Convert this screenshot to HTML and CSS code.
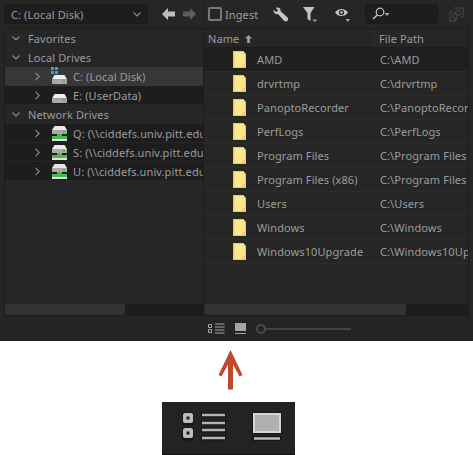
FILE: index.html
```html
<!DOCTYPE html>
<html lang="en">
<head>
    <meta charset="UTF-8">
    <title>Media Browser</title>
    <link rel="stylesheet" href="styles.css">
</head>
<body>
    <svg class="defs">
        <symbol id="chev-down" viewBox="0 0 8 5"><path d="M.5.5L4 4 7.500.5" fill="none" stroke="#8d8d8d" stroke-width="1.1"/></symbol>
        <symbol id="chev-right" viewBox="0 0 5 9"><path d="M.5.8L4.200 4.500.5 8.200" fill="none" stroke="#8d8d8d" stroke-width="1.1"/></symbol>
        <symbol id="folder" viewBox="0 0 13 17">
            <path d="M0 0h10.500L13 3v14H0z" fill="#f4c94f"/>
            <path d="M1.500 1h8.500l2 2.500v9H9.500V16h-8z" fill="#fde88f"/>
            <path d="M9.500 12.500H12V16H9.500z" fill="#f8d766"/>
        </symbol>
        <symbol id="drive" viewBox="0 0 15 9">
            <path d="M2.500 0h10L15 4.500H0z" fill="#f0f0f0"/>
            <path d="M0 4.500h15V8a1 1 0 0 1-1 1H1a1 1 0 0 1-1-1z" fill="#a9a9a9"/>
            <rect x="11" y="5.500" width="2" height="2" fill="#35c23d"/>
        </symbol>
        <symbol id="netdrive" viewBox="0 0 15 15">
            <path d="M2.500 0h10L15 4H0z" fill="#e8e8e8"/>
            <rect y="4" width="15" height="4" fill="#a9a9a9"/>
            <rect x="11" y="5" width="2" height="2" fill="#35c23d"/>
            <path d="M5 8h5v2h5v3H0v-3h5z" fill="#47b94d"/>
            <rect y="13" width="15" height="2" fill="#e0e0e0"/>
        </symbol>
    </svg>

    <div class="panel">
        <div class="toolbar">
            <div class="select">
                <span>C: (Local Disk)</span>
                <svg class="sel-chev"><use href="#chev-down"/></svg>
            </div>
            <div class="nav">
                <svg width="14" height="12" viewBox="0 0 14 12"><path d="M0 6l6-6v3.500h7v5H6V12z" fill="#bdbdbd"/></svg>
                <svg width="14" height="12" viewBox="0 0 14 12"><path d="M14 6L8 0v3.500H1v5h7V12z" fill="#5d5d5d"/></svg>
            </div>
            <div class="sep"></div>
            <div class="ingest">
                <span class="check"></span>
                <span>Ingest</span>
            </div>
            <svg class="tool wrench" width="15" height="15" viewBox="0 0 15 15"><path d="M.5 2.500L3 5l2-1.500L3 1C5-.2 8 1 7.500 4l7 6.500c1 1 .7 2.300 0 3.200s-2.500 1-3.500 0L5 7C2.500 8 0 5.500.5 2.500z" fill="#c4c4c4"/></svg>
            <svg class="tool filter" width="15" height="17" viewBox="0 0 15 17"><path d="M0 1h11.500L7.500 7v8l-3-2V7z" fill="#c4c4c4"/><path d="M9.500 13.500h4.500L11.800 16z" fill="#a8a8a8"/></svg>
            <svg class="tool eye" width="15" height="15" viewBox="0 0 15 15"><path d="M0 5.500C3 .8 10 .8 13 5.500 10 10.200 3 10.200 0 5.500z" fill="#c4c4c4"/><circle cx="6.500" cy="5.500" r="2.600" fill="#262626"/><circle cx="6.500" cy="5.500" r="1.300" fill="#c4c4c4"/><path d="M10.500 12h4.500L12.800 15z" fill="#a8a8a8"/></svg>
            <div class="search">
                <svg width="18" height="13" viewBox="0 0 18 13"><circle cx="8" cy="5" r="3.800" fill="none" stroke="#c4c4c4" stroke-width="1.200"/><path d="M5.200 8L1 12" stroke="#c4c4c4" stroke-width="1.500"/><path d="M12.500 6h5L15 9z" fill="#a8a8a8"/></svg>
            </div>
            <svg class="link" width="15" height="15" viewBox="0 0 15 15"><path d="M5 1h9v9h-2M1 8V5h3M1 8v6h6v-3" fill="none" stroke="#4a4a4a"/><circle cx="6" cy="9" r="2.500" fill="none" stroke="#4a4a4a"/><circle cx="9" cy="6" r="2.500" fill="none" stroke="#4a4a4a"/></svg>
        </div>

        <div class="browser">
            <div class="tree">
                <div class="tree-body">
                    <div class="tree-row"><svg class="chev-d"><use href="#chev-down"/></svg><span>Favorites</span></div>
                    <div class="tree-row"><svg class="chev-d"><use href="#chev-down"/></svg><span>Local Drives</span></div>
                    <div class="tree-row sub active">
                        <svg class="chev-r"><use href="#chev-right"/></svg>
                        <span class="drive-wrap">
                            <svg class="win" viewBox="0 0 7 7"><path d="M0 0h3v3H0zM4 0h3v3H4zM0 4h3v3H0zM4 4h3v3H4z" fill="#21a9e8"/></svg>
                            <svg class="drive"><use href="#drive"/></svg>
                        </span>
                        <span>C: (Local Disk)</span>
                    </div>
                    <div class="tree-row sub dark">
                        <svg class="chev-r"><use href="#chev-right"/></svg>
                        <span class="drive-wrap"><svg class="drive"><use href="#drive"/></svg></span>
                        <span>E: (UserData)</span>
                    </div>
                    <div class="tree-row"><svg class="chev-d"><use href="#chev-down"/></svg><span>Network Drives</span></div>
                    <div class="tree-row sub dark">
                        <svg class="chev-r"><use href="#chev-right"/></svg>
                        <span class="drive-wrap"><svg class="netdrive"><use href="#netdrive"/></svg></span>
                        <span>Q: (\\ciddefs.univ.pitt.edu</span>
                    </div>
                    <div class="tree-row sub dark">
                        <svg class="chev-r"><use href="#chev-right"/></svg>
                        <span class="drive-wrap"><svg class="netdrive"><use href="#netdrive"/></svg></span>
                        <span>S: (\\ciddefs.univ.pitt.edu</span>
                    </div>
                    <div class="tree-row sub dark">
                        <svg class="chev-r"><use href="#chev-right"/></svg>
                        <span class="drive-wrap"><svg class="netdrive"><use href="#netdrive"/></svg></span>
                        <span>U: (\\ciddefs.univ.pitt.edu</span>
                    </div>
                </div>
                <div class="scroll"><div class="thumb left-thumb"></div></div>
            </div>

            <div class="files">
                <div class="files-body">
                    <div class="file-head">
                        <div class="col-name">Name <svg width="7" height="8" viewBox="0 0 7 8"><path d="M3.500 0L7 3.500H4.800V8H2.200V3.500H0z" fill="#a0a0a0"/></svg></div>
                        <div class="col-path">File Path</div>
                    </div>
                    <div class="file-row first"><svg class="folder"><use href="#folder"/></svg><span class="fname">AMD</span><span class="fpath">C:\AMD</span></div>
                    <div class="file-row"><svg class="folder"><use href="#folder"/></svg><span class="fname">drvrtmp</span><span class="fpath">C:\drvrtmp</span></div>
                    <div class="file-row"><svg class="folder"><use href="#folder"/></svg><span class="fname">PanoptoRecorder</span><span class="fpath">C:\PanoptoRecorder</span></div>
                    <div class="file-row"><svg class="folder"><use href="#folder"/></svg><span class="fname">PerfLogs</span><span class="fpath">C:\PerfLogs</span></div>
                    <div class="file-row"><svg class="folder"><use href="#folder"/></svg><span class="fname">Program Files</span><span class="fpath">C:\Program Files</span></div>
                    <div class="file-row"><svg class="folder"><use href="#folder"/></svg><span class="fname">Program Files (x86)</span><span class="fpath">C:\Program Files (x86)</span></div>
                    <div class="file-row"><svg class="folder"><use href="#folder"/></svg><span class="fname">Users</span><span class="fpath">C:\Users</span></div>
                    <div class="file-row"><svg class="folder"><use href="#folder"/></svg><span class="fname">Windows</span><span class="fpath">C:\Windows</span></div>
                    <div class="file-row"><svg class="folder"><use href="#folder"/></svg><span class="fname">Windows10Upgrade</span><span class="fpath">C:\Windows10Upgrade</span></div>
                </div>
                <div class="scroll"><div class="thumb right-thumb"></div></div>
            </div>
        </div>

        <div class="statusbar">
            <svg width="17" height="11" viewBox="0 0 17 11"><path d="M.5 1.500h3v3h-3zM.5 6.500h3v3h-3z" fill="none" stroke="#a5a5a5"/><path d="M7 1h9.500M7 4h9.500M7 7h9.500M7 10h9.500" stroke="#a5a5a5"/></svg>
            <svg class="thumb-view" width="11" height="11" viewBox="0 0 11 11"><rect width="11" height="8" fill="#a5a5a5"/><path d="M0 10.500h11" stroke="#a5a5a5"/></svg>
            <span class="slider-knob"></span>
            <span class="slider-track"></span>
        </div>
    </div>

    <div class="callout">
        <svg width="25" height="40" viewBox="0 0 25 40"><path d="M12.500 0L24.500 25l-3 1.500-6.500-12V39.500h-5V14.500l-6.500 12-3-1.500z" fill="#c0492b"/></svg>
        <div class="enlarged">
            <svg class="big-list" width="46" height="30" viewBox="0 0 46 30">
                <path d="M1 3h8v8H1zM1 18h8v8H1zM19 3h25M19 11h25M19 18h25M19 26h25" stroke="#171717" stroke-width="5" fill="none"/>
                <rect x="1" y="1" width="10" height="10" rx="2" fill="#bdbdbd"/><rect x="4.500" y="4.500" width="3" height="3" fill="#1d1d1d"/>
                <rect x="1" y="16" width="10" height="10" rx="2" fill="#bdbdbd"/><rect x="4.500" y="19.500" width="3" height="3" fill="#1d1d1d"/>
                <path d="M20 3h23M20 11h23M20 18h23M20 26h23" stroke="#b4b4b4" stroke-width="2.500"/>
            </svg>
            <svg width="30" height="30" viewBox="0 0 30 30">
                <path d="M0 0h30v22H0zM0 24h30v5H0z" fill="#171717"/>
                <rect x="2" y="2" width="26" height="18" fill="#b0b0b0" stroke="#d6d6d6" stroke-width="2"/>
                <path d="M2 26.500h26" stroke="#bdbdbd" stroke-width="2.500"/>
            </svg>
        </div>
    </div>
</body>
</html>
```

FILE: styles.css
```css
* {
    margin: 0;
    padding: 0;
    box-sizing: border-box;
    font-family: "Noto Sans", Arial, sans-serif;
}

html, body {
    background: #fff;
    overflow: hidden;
}

.defs {
    display: none;
}

.panel {
    width: 473px;
    height: 341px;
    background: #262626;
    color: #9c9c9c;
    font-size: 11px;
    letter-spacing: .1px;
    display: flex;
    flex-direction: column;
}

.toolbar {
    height: 28px;
    flex: none;
    display: flex;
    align-items: center;
    padding-left: 4px;
}

.select {
    width: 144px;
    height: 20px;
    background: #1d1d1d;
    border: 1px solid #191919;
    border-radius: 3px;
    display: flex;
    align-items: center;
    justify-content: space-between;
    padding: 0 6px 0 6px;
}

.sel-chev {
    width: 8px;
    height: 5px;
}

.nav {
    display: flex;
    gap: 6px;
    margin-left: 14px;
}

.sep {
    width: 1px;
    height: 22px;
    background: #1d1d1d;
    margin-left: 8px;
}

.ingest {
    display: flex;
    align-items: center;
    gap: 3px;
    width: 64px;
    margin-left: 3px;
}

.check {
    width: 14px;
    height: 14px;
    border: 2px solid #777;
    border-radius: 2px;
}

.tool {
    flex: none;
}

.wrench {
    margin-left: 1px;
}

.filter {
    margin-left: 15px;
}

.eye {
    margin-left: 17px;
}

.search {
    width: 73px;
    height: 20px;
    background: #1d1d1d;
    border: 1px solid #191919;
    border-radius: 3px;
    margin-left: 15px;
    padding: 2px 0 0 6px;
}

.link {
    margin-left: 11px;
}

.browser {
    flex: 1;
    min-height: 0;
    display: flex;
    padding: 0 4px 0 4px;
}

.tree {
    width: 200px;
    flex: none;
    display: flex;
    flex-direction: column;
    border: 1px solid #1c1c1c;
    overflow: hidden;
}

.tree-body {
    flex: 1;
}

.tree-row {
    height: 19px;
    display: flex;
    align-items: center;
    white-space: nowrap;
    overflow: hidden;
    padding-left: 7px;
    color: #979ba0;
}

.tree-row.sub {
    padding-left: 30px;
    color: #9c9c9c;
}

.tree-row.active {
    background: #373737;
}

.tree-row.dark {
    background: #1d1d1d;
    border-bottom: 1px solid #262626;
}

.chev-d {
    width: 8px;
    height: 5px;
    margin-right: 8px;
    flex: none;
}

.chev-r {
    width: 5px;
    height: 9px;
    margin-right: 12px;
    flex: none;
}

.drive-wrap {
    width: 15px;
    height: 15px;
    margin-right: 6px;
    flex: none;
    position: relative;
    display: flex;
    align-items: flex-end;
}

.drive {
    width: 15px;
    height: 9px;
}

.netdrive {
    width: 15px;
    height: 15px;
}

.win {
    position: absolute;
    left: -1px;
    top: -2px;
    width: 7px;
    height: 7px;
}

.scroll {
    height: 11px;
    flex: none;
    background: #1d1d1d;
}

.thumb {
    height: 100%;
    background: #333;
    border-radius: 3px;
}

.left-thumb {
    width: 120px;
}

.right-thumb {
    width: 202px;
}

.files {
    flex: 1;
    min-width: 0;
    display: flex;
    flex-direction: column;
    border: 1px solid #1c1c1c;
    border-left: 0;
    overflow: hidden;
}

.files-body {
    flex: 1;
    overflow: hidden;
}

.file-head {
    height: 19px;
    display: flex;
    align-items: center;
    border-bottom: 1px solid #1c1c1c;
    color: #979ba0;
}

.col-name {
    width: 171px;
    padding-left: 4px;
    border-right: 1px solid #2e2e2e;
}

.col-name svg {
    margin-left: 3px;
}

.col-path {
    padding-left: 4px;
    white-space: nowrap;
}

.file-row {
    height: 24px;
    display: flex;
    align-items: center;
    white-space: nowrap;
    border-bottom: 1px solid #2c2c2c;
    padding-left: 29px;
}

.file-row.first {
    background: #1f1f1f;
}

.folder {
    width: 13px;
    height: 17px;
    flex: none;
    margin-right: 11px;
}

.fname {
    width: 123px;
    flex: none;
}

.fpath {
    overflow: hidden;
}

.statusbar {
    height: 25px;
    flex: none;
    display: flex;
    align-items: center;
    padding-left: 208px;
    background: #242424;
}

.thumb-view {
    margin-left: 10px;
}

.slider-knob {
    width: 10px;
    height: 10px;
    border: 2px solid #4a4a4a;
    border-radius: 50%;
    margin-left: 10px;
}

.slider-track {
    width: 85px;
    height: 2px;
    background: #444;
}

.callout {
    display: flex;
    flex-direction: column;
    align-items: center;
    width: 133px;
    margin-left: 162px;
    padding-top: 9px;
}

.callout > svg {
    margin-left: 3px;
}

.enlarged {
    width: 133px;
    height: 54px;
    background: #232323;
    border-bottom: 2px solid #111;
    margin-top: 12px;
    display: flex;
    align-items: flex-start;
    gap: 24px;
    padding: 10px 0 0 20px;
}
```
